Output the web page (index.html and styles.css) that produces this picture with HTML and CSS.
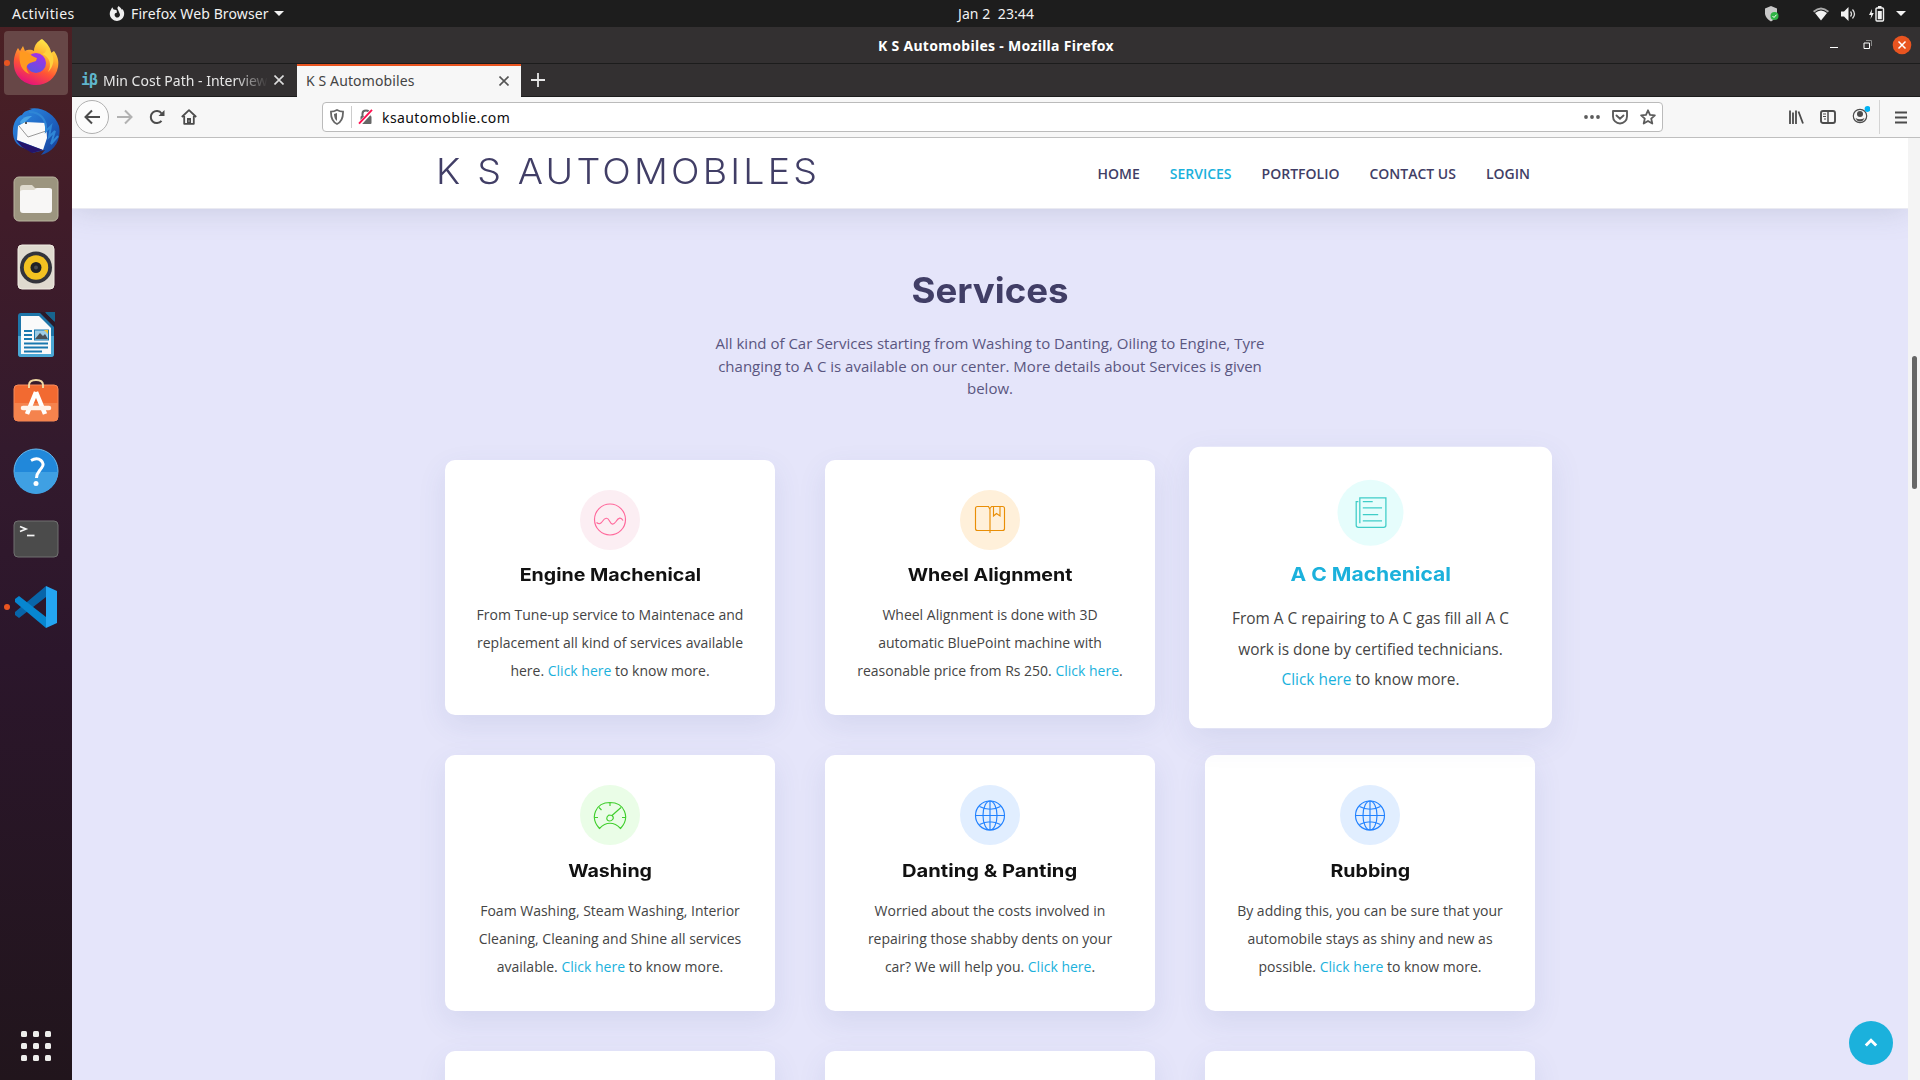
FILE: index.html
```html
<!DOCTYPE html>
<html lang="en">
<head>
<meta charset="utf-8">
<title>K S Automobiles</title>
<link rel="stylesheet" href="styles.css">
</head>
<body>
<div class="topbar">
  <span class="activities">Activities</span>
  <svg class="app-icon" width="16" height="16" viewBox="0 0 16 16"><path d="M3.2 1.2 4.6 3.4 7.5 4 8 6.6 6.2 7.3A2.6 2.6 0 1 0 10.6 7.6L9.3 4.4 8.3 2 9.6 0 12 2.2 12.6 3.6 13.6 3.2A7.2 7.2 0 1 1 1.2 5.2Z" fill="#eee"/></svg>
  <span class="app-name">Firefox Web Browser</span>
  <i class="caret"></i>
  <span class="clock">Jan 2&nbsp; 23:44</span>
  <div class="tray">
    <svg width="16" height="18" viewBox="0 0 16 18"><path d="M7 1 13 3.5V9Q12 14 7 16.500Q2 14 1 9V3.500Z" fill="#c8c8c8"/><circle cx="10.500" cy="11" r="4" fill="#2fb344"/><path d="m8.500 11 1.500 1.500 2.500-2.800" fill="none" stroke="#fff"/></svg>
    <svg class="wifi" width="16" height="14" viewBox="0 0 16 14"><path d="M0 4Q8-3 16 4L14.800 5.500Q8-.5 1.200 5.500Z" fill="#aaa"/><path d="M2 6Q8 1 14 6L8 13.500Z" fill="#f2f2f2"/></svg>
    <svg class="volume" width="16" height="14" viewBox="0 0 16 14"><path d="M0 4.500H3L7.500 0V14L3 9.500H0Z" fill="#f2f2f2"/><path d="M9.500 4.500Q11.500 7 9.500 9.500M11.500 2.500Q15.500 7 11.500 11.500" fill="none" stroke="#ddd" stroke-width="1.300"/></svg>
    <svg class="battery" width="16" height="16" viewBox="0 0 16 16"><path d="M3 3 0 9H2.200L1.500 13 4.800 7H2.700Z" fill="#f2f2f2"/><rect x="7" y="2" width="7.500" height="13" rx="1" fill="none" stroke="#f2f2f2" stroke-width="1.400"/><path d="M9 0H12.500V2H9ZM8.800 5H12.800V13.300H8.800Z" fill="#f2f2f2"/></svg>
    <i class="caret"></i>
  </div>
</div>
<div class="desktop">
  <div class="dock">
    <div class="slot active running">
      <svg class="firefox" width="48" height="48" viewBox="0 0 48 48"><defs><linearGradient id="fx" x1=".8" y1="0" x2=".35" y2="1"><stop offset="0" stop-color="#fff44f"/><stop offset=".35" stop-color="#ffb02e"/><stop offset=".65" stop-color="#ff5634"/><stop offset="1" stop-color="#e5117c"/></linearGradient><linearGradient id="orb" x1=".7" y1="0" x2=".3" y2="1"><stop offset="0" stop-color="#a72fe8"/><stop offset="1" stop-color="#5a55e0"/></linearGradient></defs>
      <path d="M30 1C35 5 39 10 39 15L42 13C46 18 47 24 46 29 44 40 35 47 24 47S3 39 2 28C1 20 4 13 6 10L8 13 11 8 13 13C17 11 20 12 22 13 22 7 26 3 30 1Z" fill="url(#fx)"/><circle cx="24" cy="25" r="10" fill="url(#orb)"/><path d="M8 14C14 12 18 18 25 20L24 23 18 25C13 27 14 33 18 36 10 34 6 25 8 14Z" fill="#ff9a20"/><path d="M30 16C38 19 40 27 36 34 42 28 43 20 39 14L34 8C35 12 34 15 30 16Z" fill="#ffd23e"/></svg>
    </div>
    <div class="slot">
      <svg width="48" height="48" viewBox="0 0 48 48"><defs><linearGradient id="tb" x1="0" y1="0" x2="1" y2="1"><stop offset="0" stop-color="#2f8fe6"/><stop offset=".6" stop-color="#1d5fbd"/><stop offset="1" stop-color="#153d96"/></linearGradient></defs><path d="M17 2C29-1 43 7 47 19 50 34 41 45 29 48L33 43 20 46 23 42C10 43 2 38 1 27 0 17 5 9 10 8 12 4 15 4 20 2Z" fill="url(#tb)"/><path d="M6 19 13 15 34 16 35 31 31 43 5 33Z" fill="#fafafa"/><path d="M7 19 16 30 34 24" fill="none" stroke="#999"/><path d="M4 33 31 43 20 46 10 40Z" fill="#24146b"/><path d="M17 5C28 5 35 12 34 24L39 19 37 30 43 24 39 37 46 29" fill="none" stroke="#2f86d6" stroke-width="2"/><path d="M8 15Q12 8 20 9L13 15 9 17Z" fill="#4ba6e6"/><circle cx="14" cy="16" r="1" fill="#222"/></svg>
    </div>
    <div class="slot">
      <svg width="46" height="46" viewBox="0 0 46 46"><rect x="1" y="1" width="44" height="44" rx="5" fill="#9c957f" stroke="#b9b49f"/><path d="M7 12Q7 9 10 9H19L22 12H36V20H7Z" fill="#dedacd"/><path d="M7 16Q7 14 10 14H21L24 12H36Q39 12 39 14V34Q39 37 36 37H10Q7 37 7 34Z" fill="#f8f7f6"/></svg>
    </div>
    <div class="slot">
      <svg width="38" height="46" viewBox="0 0 38 46"><rect x="1" y="1" width="36" height="44" rx="4" fill="#dfdacf" stroke="#f0ece3"/><circle cx="19" cy="23.500" r="16" fill="#33343b"/><circle cx="19" cy="23.500" r="12.200" fill="#f3c221"/><circle cx="19" cy="23.500" r="5.500" fill="#202226"/><circle cx="19" cy="23.500" r="2" fill="#484b50"/></svg>
    </div>
    <div class="slot">
      <svg width="38" height="46" viewBox="0 0 38 46"><path d="M4 1H37V42Q37 45 34 45H4Q1 45 1 42V4Q1 1 4 1Z" fill="#1e76a9"/><path d="M1 24H37V42Q37 45 34 45H4Q1 45 1 42Z" fill="#4aa7d4"/><path d="M4 4H22L34 16V42H4Z" fill="#fafafa"/><path d="M22 0 38 16V10L28 0Z" fill="#2b1a29"/><path d="M28 0H38V10Z" fill="#17648e"/><path d="M7 19H15M7 23H15M7 27H15M7 31.500H31M7 35.500H31M7 39.500H25" stroke="#1978af" stroke-width="2"/><rect x="17.500" y="18" width="14" height="10" fill="#9dcce6" stroke="#1978af"/><path d="M18 27 23 21 26 24 28 22 31 27Z" fill="#4a5055"/><path d="M27 18H31V22Z" fill="#f0c437"/></svg>
    </div>
    <div class="slot">
      <svg class="software" width="46" height="48" viewBox="0 0 46 48"><rect x="1" y="9" width="44" height="36" rx="4" fill="#f26a31" stroke="#f68b5c"/><path d="M1 27H45V41Q45 45 41 45H5Q1 45 1 41Z" fill="#f5834d"/><path d="M16 12V9Q16 4 23 4T30 9V12" fill="none" stroke="#f1d8a3" stroke-width="2"/><path d="M23 16 14 38M23 16 32 38" stroke="#fff" stroke-width="4.500"/><path d="M10 32H36" stroke="#fff4eb" stroke-width="4.500" stroke-linecap="round"/></svg>
    </div>
    <div class="slot">
      <svg width="46" height="46" viewBox="0 0 46 46"><circle cx="23" cy="23" r="22" fill="#2188da" stroke="#67b9ee"/><path d="M1 24H45A22 22 0 0 1 1 24Z" fill="#3fa0e3"/><path d="M18 12.500Q24 9 28 12.500T28.500 20C26 23.500 23.500 25 23.500 30" fill="none" stroke="#fff" stroke-width="3"/><circle cx="23" cy="35.500" r="2.500" fill="#fff"/></svg>
    </div>
    <div class="slot">
      <svg width="46" height="38" viewBox="0 0 46 38"><rect x="1" y="1" width="44" height="36" rx="4" fill="#4b4b4b" stroke="#717171"/><path d="M7 6.500 13 9 7 11.500" fill="none" stroke="#f5f5f5" stroke-width="1.700"/><path d="M14 15.500H21.500" stroke="#f5f5f5" stroke-width="1.700"/></svg>
    </div>
    <div class="slot running">
      <svg width="44" height="44" viewBox="0 0 44 44"><path d="M32 1V12L5 33 1 30V27Z" fill="#0865a9"/><path d="M1 14 5 11 32 32V43L1 17Z" fill="#0786d0"/><path d="M32 1 43 6V38L32 43Z" fill="#24a5f2"/></svg>
    </div>
    <svg class="apps" width="30" height="30" viewBox="0 0 30 30" fill="#eeeeec"><rect width="6" height="6" rx="1.500"/><rect x="12" width="6" height="6" rx="1.500"/><rect x="24" width="6" height="6" rx="1.500"/><rect y="12" width="6" height="6" rx="1.500"/><rect x="12" y="12" width="6" height="6" rx="1.500"/><rect x="24" y="12" width="6" height="6" rx="1.500"/><rect y="24" width="6" height="6" rx="1.500"/><rect x="12" y="24" width="6" height="6" rx="1.500"/><rect x="24" y="24" width="6" height="6" rx="1.500"/></svg>
  </div>
  <div class="window">
    <div class="titlebar">
      <span class="window-title">K S Automobiles - Mozilla Firefox</span>
      <div class="window-buttons">
        <svg width="8" height="16" viewBox="0 0 8 16"><path d="M0 10.500H8" stroke="#fff"/></svg>
        <svg class="restore" width="10" height="10" viewBox="0 0 10 10"><path d="M1 3H6.500V8.500H1Z" fill="none" stroke="#fff"/><path d="M3 .5H8.500V6" fill="none" stroke="#888"/></svg>
        <svg width="20" height="20" viewBox="0 0 20 20"><circle cx="10" cy="10" r="9.300" fill="#e95420"/><path d="m6.500 6.500 7 7m0-7-7 7" stroke="#fff" stroke-width="1.500"/></svg>
      </div>
    </div>
    <div class="tabs">
      <div class="tab"><b class="favicon">iβ</b><span class="tab-label faded">Min Cost Path - Interview</span><svg width="10" height="10" viewBox="0 0 10 10"><path d="m.5.5 9 9m0-9-9 9" stroke="#ddd" stroke-width="1.600"/></svg></div>
      <div class="tab current"><span class="tab-label">K S Automobiles</span><svg width="10" height="10" viewBox="0 0 10 10"><path d="m.5.5 9 9m0-9-9 9" stroke="#555" stroke-width="1.600"/></svg></div>
      <svg class="new-tab" width="14" height="14" viewBox="0 0 14 14"><path d="M7 0V14M0 7H14" stroke="#e8e8e8" stroke-width="1.800"/></svg>
    </div>
    <div class="toolbar">
      <div class="nav-buttons">
        <span class="back"><svg width="16" height="16" viewBox="0 0 16 16"><path d="M16 8H1.500M8 1.500 1.500 8 8 14.500" fill="none" stroke="#4c4c4c" stroke-width="2"/></svg></span>
        <svg width="16" height="16" viewBox="0 0 16 16"><path d="M0 8H14.500M8 1.500 14.500 8 8 14.500" fill="none" stroke="#b2b2b2" stroke-width="2"/></svg>
        <svg width="16" height="16" viewBox="0 0 16 16"><path d="M12.500 11.800A6 6 0 1 1 12.600 4.500" fill="none" stroke="#4c4c4c" stroke-width="2"/><path d="M15.500 1V7H9.500Z" fill="#4c4c4c"/></svg>
        <svg width="16" height="16" viewBox="0 0 16 16"><path d="M.8 8 8 1.200 15.200 8M3.200 7V14.800H12.800V7" fill="none" stroke="#4c4c4c" stroke-width="1.800" stroke-linejoin="round"/><path d="M6 15V9H10V15" fill="#4c4c4c"/><path d="M7.500 12H8.500" stroke="#f7f7f7"/></svg>
      </div>
      <div class="urlbar">
        <svg width="14" height="16" viewBox="0 0 14 16"><path d="M7 1Q10 2.700 13 2.700C13.200 9 11.500 13 7 15 2.500 13 .8 9 1 2.700Q4 2.700 7 1Z" fill="none" stroke="#666" stroke-width="1.800"/><path d="M7 4V12Q4 10 4 5Z" fill="#666"/></svg>
        <i class="url-rule"></i>
        <svg width="16" height="16" viewBox="0 0 16 16"><path d="M4.500 8V4.500Q4.500 1.500 8 1.500T11.500 4.500V8" fill="none" stroke="#666" stroke-width="2"/><rect x="2.500" y="7" width="11" height="8" rx="1" fill="#666"/><path d="M1.500 15 14.500 1" stroke="#fff" stroke-width="4"/><path d="M1 14.700 14 .8" stroke="#ff0f4f" stroke-width="1.900"/></svg>
        <span class="url">ksautomoblie.com</span>
        <div class="url-actions">
          <svg width="18" height="4" viewBox="0 0 18 4" fill="#5c5c5c"><circle cx="3" cy="2" r="1.900"/><circle cx="9" cy="2" r="1.900"/><circle cx="15" cy="2" r="1.900"/></svg>
          <svg width="16" height="16" viewBox="0 0 16 16"><path d="M1 2H15V7.500A7 7 0 0 1 1 7.500Z" fill="none" stroke="#5c5c5c" stroke-width="1.900" stroke-linejoin="round"/><path d="m4.500 6.500 3.500 3.300 3.500-3.300" fill="none" stroke="#5c5c5c" stroke-width="1.900" stroke-linecap="round"/></svg>
          <svg width="16" height="16" viewBox="0 0 16 16"><path d="m8 1.300 2 4.600 4.900.4-3.700 3.300L12.300 14.500 8 11.900 3.700 14.500 4.800 9.600 1.100 6.300 6 5.900Z" fill="none" stroke="#5c5c5c" stroke-width="1.800" stroke-linejoin="round"/></svg>
        </div>
      </div>
      <div class="tools">
        <svg width="16" height="16" viewBox="0 0 16 16"><path d="M2 1.500V15M5 3.500V15M8 1.500V15M10.500 2.500 15 14.500" fill="none" stroke="#4c4c4c" stroke-width="1.800"/></svg>
        <svg width="16" height="16" viewBox="0 0 16 16"><rect x="1" y="2" width="14" height="12" rx="2" fill="none" stroke="#4c4c4c" stroke-width="1.900"/><path d="M8 2V14" stroke="#4c4c4c" stroke-width="1.500"/><path d="M3 5H6M3 7.500H6M4 10H6" stroke="#4c4c4c"/></svg>
        <svg class="account" width="18" height="20" viewBox="0 0 18 20"><circle cx="8" cy="11" r="6.700" fill="none" stroke="#4c4c4c" stroke-width="1.200"/><circle cx="8" cy="9" r="3" fill="#4c4c4c"/><path d="M3.500 13Q8 15.500 12.500 13Q11 16.500 8 16.500T3.500 13Z" fill="#4c4c4c"/><circle cx="15.500" cy="4" r="2.900" fill="#00b3f4"/></svg>
        <i class="tool-rule"></i>
        <svg class="menu" width="12" height="14" viewBox="0 0 12 14"><path d="M0 2.500H12M0 7.500H12M0 12.500H12" stroke="#4c4c4c" stroke-width="1.900"/></svg>
      </div>
    </div>
    <div class="viewport">
      <div class="page">
        <header>
          <div class="brand"><span>K S AUTOMOBILES</span></div>
          <nav><a>Home</a><a class="on">Services</a><a>Portfolio</a><a>Contact Us</a><a>Login</a></nav>
        </header>
        <main>
          <h2><span>Services</span></h2>
          <p class="intro">All kind of Car Services starting from Washing to Danting, Oiling to Engine, Tyre<br>changing to A C is available on our center. More details about Services is given<br>below.</p>
          <div class="cards">
            <article class="card">
              <div class="icon pink"><svg width="36" height="36" viewBox="0 0 36 36"><circle cx="18" cy="17.500" r="15.500"/><path d="M4.500 20.500C7 22.500 8.500 22 10.300 19.500 13 15.500 15.500 15 17.500 19 19.500 23 21.500 23 24 19.500 26.500 15.500 29 15 31 18.500"/></svg></div>
              <h3><span>Engine Machenical</span></h3>
              <p>From Tune-up service to Maintenace and<br>replacement all kind of services available<br>here. <a>Click here</a> to know more.</p>
            </article>
            <article class="card">
              <div class="icon orange"><svg width="36" height="36" viewBox="0 0 36 36"><path d="M18 31V7.500L16.500 4.500H5.500Q3.500 4.500 3.500 6.500V26.500Q3.500 28.500 5.500 28.500H30.500Q32.500 28.500 32.500 26.500V6.500Q32.500 4.500 30.500 4.500H19.500L18 6.500M21.500 4.500V14L24.500 11.500 28 14V4.500"/></svg></div>
              <h3><span>Wheel Alignment</span></h3>
              <p>Wheel Alignment is done with 3D<br>automatic BluePoint machine with<br>reasonable price from Rs 250. <a>Click here</a>.</p>
            </article>
            <article class="card raised">
              <div class="icon teal"><svg width="36" height="36" viewBox="0 0 36 36"><path d="M8.300 27.500V4.500H32V29.500Q32 31.300 30 31.300H7Q5 31.300 5 29.500V8H7M11 8H20M11 13.500H28.500M11 19.700H25M11 25.500H28.500"/></svg></div>
              <h3><span>A C Machenical</span></h3>
              <p>From A C repairing to A C gas fill all A C<br>work is done by certified technicians.<br><a>Click here</a> to know more.</p>
            </article>
            <article class="card">
              <div class="icon green"><svg width="36" height="36" viewBox="0 0 36 36"><path d="M7.500 31.500C-3 20 4 5.500 18 5.500S39 20 28.500 31.500C22 24.500 14 24.500 7.500 31.500ZM18 5.500V9M2.500 20.500H6M33.500 20.500H30M7 10.500 9.500 13M29 10.500 20 18.500M20 18.500C23 21 20 24 17.500 24 14.500 24 13.500 20 17 18Z"/></svg></div>
              <h3><span>Washing</span></h3>
              <p>Foam Washing, Steam Washing, Interior<br>Cleaning, Cleaning and Shine all services<br>available. <a>Click here</a> to know more.</p>
            </article>
            <article class="card">
              <div class="icon blue"><svg width="36" height="36" viewBox="0 0 36 36"><path d="M18 4V33M3.500 18.500H32.500M7.500 9.500Q18 15 28.500 9.500M7.500 27.500Q18 22 28.500 27.500"/><circle cx="18" cy="18.500" r="14.500"/><ellipse cx="18" cy="18.500" rx="7" ry="14.500"/></svg></div>
              <h3 class="wide"><span>Danting &amp; Panting</span></h3>
              <p>Worried about the costs involved in<br>repairing those shabby dents on your<br>car? We will help you. <a>Click here</a>.</p>
            </article>
            <article class="card">
              <div class="icon blue"><svg width="36" height="36" viewBox="0 0 36 36"><path d="M18 4V33M3.500 18.500H32.500M7.500 9.500Q18 15 28.500 9.500M7.500 27.500Q18 22 28.500 27.500"/><circle cx="18" cy="18.500" r="14.500"/><ellipse cx="18" cy="18.500" rx="7" ry="14.500"/></svg></div>
              <h3><span>Rubbing</span></h3>
              <p>By adding this, you can be sure that your<br>automobile stays as shiny and new as<br>possible. <a>Click here</a> to know more.</p>
            </article>
            <article class="card"></article>
            <article class="card"></article>
            <article class="card"></article>
          </div>
        </main>
        <a class="to-top"><svg width="16" height="16" viewBox="0 0 16 16"><path d="M2.800 10.500 8 5.300 13.200 10.500" fill="none" stroke="#fff" stroke-width="3"/></svg></a>
      </div>
      <div class="scrollbar"><i></i></div>
    </div>
  </div>
</div>
</body>
</html>
```
FILE: styles.css
```css
* { box-sizing: border-box; }
html, body { margin: 0; height: 100%; overflow: hidden; }
body {
  display: flex; flex-direction: column;
  width: 1920px; height: 1080px;
  font-family: "Noto Sans", "Open Sans", sans-serif;
  font-size: 14px;
}
svg { display: block; flex: none; }

/* Desktop panel */
.topbar {
  display: flex; align-items: center;
  height: 27px; flex: none;
  padding: 0 14px 0 12px;
  background: #1d1d1d; color: #f2f2f2;
}
.activities { width: 97px; letter-spacing: .43px; }
.app-icon { margin-right: 6px; }
.app-name { width: 143px; white-space: nowrap; letter-spacing: .12px; }
.caret { border: 5px solid transparent; border-top-color: #f2f2f2; border-bottom: 0; }
.clock { margin-left: 674px; white-space: nowrap; letter-spacing: .08px; }
.tray { display: flex; align-items: center; margin-left: auto; }
.wifi { margin-left: 33px; }
.volume { margin-left: 12px; }
.battery { margin: 0 11px 0 12px; }

.desktop { display: flex; flex: 1; min-height: 0; }

/* Launcher */
.dock {
  display: flex; flex-direction: column; align-items: center; gap: 4px;
  width: 72px; padding: 4px 0 19px;
  background: linear-gradient(#4b2024, #401c29 18%, #331a2d 40%, #2b162b 60%, #21151c);
}
.slot {
  display: flex; align-items: center; justify-content: center;
  width: 64px; height: 64px; flex: none;
  border-radius: 4px; position: relative;
}
.slot.active { background: #674747; }
.slot.running::before {
  content: ""; position: absolute; left: 0; top: 29px;
  width: 6px; height: 6px; border-radius: 50%; background: #e95420;
}
.firefox { margin-bottom: 2px; }
.software { margin-bottom: 6px; }
.apps { margin-top: auto; }

/* Browser chrome */
.window { display: flex; flex-direction: column; flex: 1; min-width: 0; }
.titlebar {
  display: grid; grid-template-columns: 1fr auto 1fr; align-items: center;
  height: 37px; flex: none;
  background: #333031; border-bottom: 1px solid #1c1c1c; color: #fff;
}
.window-title { grid-column: 2; font-weight: 700; letter-spacing: .3px; white-space: nowrap; }
.window-buttons { display: flex; justify-content: flex-end; align-items: center; gap: 19px; padding-right: 8px; }
.restore { margin-left: 6px; }
.tabs {
  display: flex; height: 33px; flex: none;
  background: #333031; border-bottom: 1px solid #1c1c1c;
}
.tab { display: flex; align-items: center; width: 225px; padding: 0 13px 0 9px; color: #e6e6e6; }
.tab.current {
  width: 224px; height: 33px; margin-bottom: -1px; padding: 0 12px 2px 9px;
  background: #f7f7f7; border-top: 2px solid #e95420; color: #444;
}
.current .tab-label { letter-spacing: .12px; }
.favicon { width: 22px; font: 700 15px "DejaVu Sans Mono", monospace; letter-spacing: -1px; color: #5fb6cc; }
.tab-label { flex: 1; white-space: nowrap; }
.faded {
  width: 165px; flex: none; margin-right: auto; overflow: hidden;
  -webkit-mask-image: linear-gradient(90deg, #000 80%, transparent);
  mask-image: linear-gradient(90deg, #000 80%, transparent);
}
.new-tab { margin: 9px 0 0 10px; }
.toolbar {
  display: flex; align-items: center; height: 41px; flex: none;
  background: #f7f7f7; border-bottom: 1px solid #bfbfbf;
}
.nav-buttons { display: flex; align-items: center; gap: 16px; width: 250px; padding-left: 3px; }
.back {
  display: flex; align-items: center; justify-content: center;
  width: 34px; height: 34px; margin-right: -8px;
  background: #fcfcfc; border: 1px solid #b0b0b0; border-radius: 50%;
}
.urlbar {
  display: flex; align-items: center;
  width: 1341px; height: 30px; padding: 0 6px 0 7px;
  background: #fff; border: 1px solid #bbb; border-radius: 4px;
}
.url-rule { width: 1px; height: 22px; margin: 0 6px 0 7px; background: #ccc; }
.url { margin-left: 8px; color: #0c0c0d; letter-spacing: .42px; }
.url-actions { display: flex; align-items: center; gap: 12px; margin-left: auto; }
.url-actions svg:first-child { margin-right: -1px; }
.tools { display: flex; align-items: center; margin-left: 125px; gap: 16px; }
.account { margin-top: -4px; }
.tool-rule { width: 1px; height: 34px; margin-left: -7px; background: #d4d4d4; }
.menu { margin-left: -1px; }

/* Web page */
.viewport { display: flex; flex: 1; min-height: 0; }
.page {
  position: relative; flex: 1; overflow: hidden;
  background: #e5e5fa; font-family: "Open Sans", sans-serif;
}
.scrollbar { width: 12px; padding: 218px 3px 0 4px; background: #f4f4f4; }
.scrollbar i { display: block; width: 5px; height: 133px; border-radius: 3px; background: #666; }
header {
  display: flex; align-items: center; justify-content: space-between;
  height: 71px; padding: 0 378px 0 364px;
  background: #fff; border-bottom: 1px solid #eaeaf2;
  box-shadow: 0 0 30px rgba(127, 137, 161, .3);
}
.brand {
  font: 300 35.500px/1 Inter, sans-serif; letter-spacing: 3px; color: #413e66;
  white-space: nowrap; margin-top: -2px;
}
nav { display: flex; gap: 30px; }
nav a { font-size: 14px; font-weight: 600; text-transform: uppercase; color: #413e66; }
nav a.on { color: #1bb1dc; }
h2, h3 { font-family: Inter, sans-serif; font-weight: 700; text-align: center; }
h2 span, h3 span, .brand span { display: inline-block; }
.brand span { transform: scaleX(1.058); transform-origin: left; }
h2 { margin: 60px 0 20px; font-size: 35px; line-height: 43px; color: #413e66; }
h2 span { transform: scaleX(1.047); }
h3 span { transform: scaleX(1.128); }
h3.wide span { transform: scaleX(1.158); }
.intro { margin: 0; text-align: center; font-size: 15px; line-height: 22.500px; color: #5a5680; }
.cards {
  display: grid; grid-template-columns: repeat(3, 330px); grid-auto-rows: 255.600px;
  gap: 40px 50px; justify-content: center; margin-top: 60px;
}
.card {
  padding: 30px 0; text-align: center;
  background: #fff; border-radius: 10px;
  box-shadow: 0 10px 29px rgba(68, 88, 144, .1);
}
.raised { transform: translate(.5px, -.5px) scale(1.1); }
.icon {
  display: flex; align-items: center; justify-content: center;
  width: 60px; height: 60px; margin: 0 auto 14.500px; border-radius: 50%;
}
.icon svg { fill: none; stroke: currentColor; stroke-width: 1.150; }
.pink { background: #fceef3; color: #ff689b; }
.orange { background: #fff0da; color: #e98e06; }
.teal { background: #e6fdfc; color: #3fcdc7; }
.green { background: #eafde7; color: #41cf2e; }
.blue { background: #e1eeff; color: #2282ff; }
h3 { margin: 0 0 15.500px; font-size: 17.400px; line-height: 21.600px; color: #111; }
.raised h3 { color: #1bb1dc; }
.raised h3 span { transform: scaleX(1.1); }
.card p { margin: 0; font-size: 14px; line-height: 28px; color: #444; }
.card a { color: #1bb1dc; }
.to-top {
  position: absolute; right: 15px; bottom: 15px;
  display: flex; align-items: center; justify-content: center;
  width: 44px; height: 44px; border-radius: 50%; background: #1bb1dc;
}
```
